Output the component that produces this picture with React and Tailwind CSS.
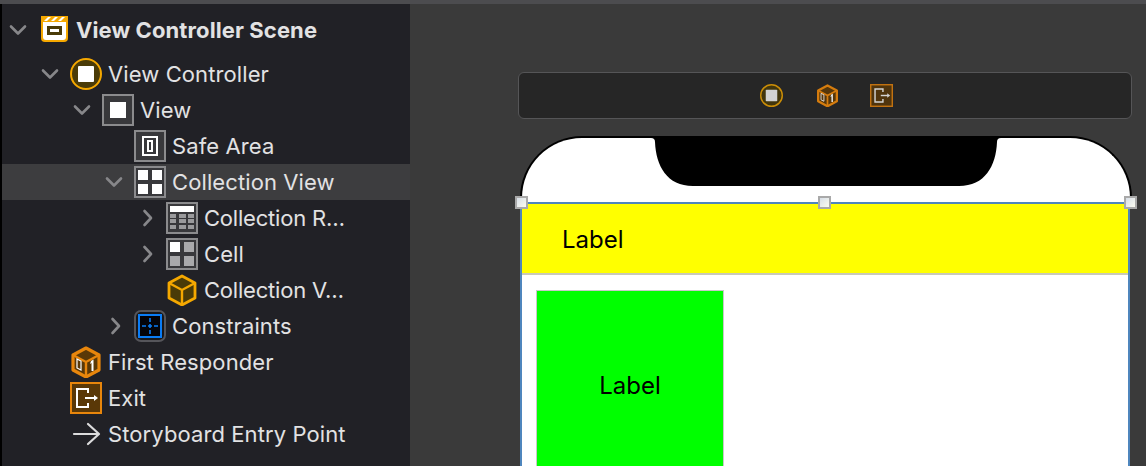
import React from "react";

const ORANGE = "#f5a800";
const OLIVE = "#4a3b08";
const AMBER = "#e8860c";
const BROWN = "#5a3807";

const Chevron = ({ dir }) => (
  <svg width="20" height="20" viewBox="0 0 20 20" fill="none" stroke="#87878a" strokeWidth="2.6" strokeLinecap="round" strokeLinejoin="round">
    {dir === "down" ? <path d="M3 6.5 L10 13.5 L17 6.5" /> : <path d="M8.5 3 L15 10 L8.5 17" />}
  </svg>
);

const Box = ({ children }) => (
  <svg width="32" height="32" viewBox="0 0 32 32">
    <rect x="1" y="1" width="30" height="30" fill="#38383b" stroke="#8b8b8d" strokeWidth="2" />
    {children}
  </svg>
);

const SceneIcon = () => (
  <svg width="32" height="32" viewBox="0 0 32 32">
    <path d="M3 2 H30 V24 Q30 28 26 28 H7 Q3 28 3 24 Z" fill={ORANGE} />
    <path d="M5 8 H28 V23 Q28 26 25 26 H8 Q5 26 5 23 Z" fill="#fff" />
    <path d="M6 7 L10 3 H13 L9 7 Z M13 7 L17 3 H20 L16 7 Z M20 7 L24 3 H27 L23 7 Z" fill="#fff" />
    <rect x="9" y="12" width="15" height="9" fill={OLIVE} />
    <rect x="12" y="15" width="9" height="3" fill="#fff" />
  </svg>
);

const ControllerIcon = ({ size = 32 }) => (
  <svg width={size} height={size} viewBox="0 0 32 32">
    <circle cx="16" cy="16" r="15" fill={OLIVE} stroke={ORANGE} strokeWidth="2" />
    <rect x="8" y="8" width="16" height="16" rx="1" fill="#fff" />
  </svg>
);

const ViewIcon = () => (
  <Box>
    <rect x="8" y="8" width="16" height="16" fill="#fff" />
  </Box>
);

const SafeAreaIcon = () => (
  <Box>
    <path fillRule="evenodd" d="M8 6 H24 V26 H8 Z M10 8 V24 H22 V8 Z" fill="#fff" />
    <path fillRule="evenodd" d="M13 10 H19 V22 H13 Z M15 12 V20 H17 V12 Z" fill="#fff" />
  </Box>
);

const GridIcon = () => (
  <Box>
    <rect x="4" y="4" width="10" height="10" fill="#fff" />
    <rect x="18" y="4" width="10" height="10" fill="#fff" />
    <rect x="4" y="18" width="10" height="10" fill="#fff" />
    <rect x="18" y="18" width="10" height="10" fill="#fff" />
  </Box>
);

const TableIcon = () => (
  <Box>
    <rect x="4" y="4" width="24" height="6" fill="#fff" />
    {[12, 17, 23].map((y) =>
      [4, 13, 22].map((x) => <rect key={`${x}-${y}`} x={x} y={y} width={x === 13 ? 7 : 6} height="4" fill="#9a9a9c" />)
    )}
  </Box>
);

const CellIcon = () => (
  <Box>
    <rect x="4" y="4" width="10" height="10" fill="#fff" />
    <rect x="18" y="4" width="10" height="10" fill="#a9a9ab" />
    <rect x="4" y="18" width="10" height="10" fill="#a9a9ab" />
    <rect x="18" y="18" width="10" height="10" fill="#a9a9ab" />
  </Box>
);

const CubeIcon = () => (
  <svg width="32" height="32" viewBox="0 0 32 32">
    <path d="M16 2 L29 9 V24 L16 31 L3 24 V9 Z" fill={OLIVE} stroke={ORANGE} strokeWidth="2.8" strokeLinejoin="round" />
    <path d="M3 9 L16 16 L29 9 M16 16 V31" fill="none" stroke={ORANGE} strokeWidth="2.4" />
  </svg>
);

const ConstraintsIcon = () => (
  <svg width="32" height="32" viewBox="0 0 32 32">
    <rect x="1" y="1" width="30" height="30" rx="6" fill="#18181b" stroke="#55555a" strokeWidth="2" />
    <rect x="5" y="5" width="22" height="22" fill="#04040a" stroke="#0a7cf5" strokeWidth="2" />
    <path d="M16 8 V12 M16 14 V18 M16 20 V24 M8 16 H12 M14 16 H18 M20 16 H24" stroke="#0a7cf5" strokeWidth="1.6" />
  </svg>
);

const ResponderIcon = ({ size = 32 }) => (
  <svg width={size} height={size} viewBox="0 0 32 32">
    <path d="M16 2 L29 9 V24 L16 31 L3 24 V9 Z" fill={BROWN} stroke={AMBER} strokeWidth="3.2" strokeLinejoin="round" />
    <path d="M3 9 L16 16 L29 9 M16 16 V31" fill="none" stroke={AMBER} strokeWidth="2.4" />
    <path d="M7 13 L11 15 V24 L7 22 Z" fill="none" stroke="#fff" strokeWidth="1.2" />
    <path d="M21 15 L23.5 13.5 V25 H21.5 V17 L20 18 Z" fill="#fff" />
  </svg>
);

const ExitIcon = ({ size = 32 }) => (
  <svg width={size} height={size} viewBox="0 0 32 32">
    <rect x="1" y="1" width="30" height="30" fill={BROWN} stroke={AMBER} strokeWidth="2" />
    <path d="M18 11 V7 H7 V25 H18 V21" fill="none" stroke="#fff" strokeWidth="2" />
    <path d="M15 16 H25" stroke="#fff" strokeWidth="2" />
    <path d="M24 13 L28 16 L24 19 Z" fill="#fff" />
  </svg>
);

const ArrowIcon = () => (
  <svg width="32" height="32" viewBox="0 0 32 32" fill="none" stroke="#dcdcdd" strokeWidth="2.2" strokeLinecap="round" strokeLinejoin="round">
    <path d="M4 16 H28 M18 6 L29 16 L18 26" />
  </svg>
);

const rows = [
  { depth: 0, open: "down", Icon: SceneIcon, label: "View Controller Scene", bold: true },
  { depth: 1, open: "down", Icon: ControllerIcon, label: "View Controller" },
  { depth: 2, open: "down", Icon: ViewIcon, label: "View" },
  { depth: 3, Icon: SafeAreaIcon, label: "Safe Area" },
  { depth: 3, open: "down", Icon: GridIcon, label: "Collection View", selected: true },
  { depth: 4, open: "right", Icon: TableIcon, label: "Collection R…", tight: true },
  { depth: 4, open: "right", Icon: CellIcon, label: "Cell" },
  { depth: 4, Icon: CubeIcon, label: "Collection V…", tight: true },
  { depth: 3, open: "right", Icon: ConstraintsIcon, label: "Constraints" },
  { depth: 1, Icon: ResponderIcon, label: "First Responder" },
  { depth: 1, Icon: ExitIcon, label: "Exit" },
  { depth: 1, Icon: ArrowIcon, label: "Storyboard Entry Point" },
];

const indents = ["pl-[6px]", "pl-[38px]", "pl-[70px]", "pl-[102px]", "pl-[134px]"];

const TreeRow = ({ depth, open, Icon, label, bold, selected, tight }) => (
  <div className={`flex h-9 items-center ${indents[depth]} ${selected ? "bg-[#3d3d3f]" : ""} ${bold ? "mb-2" : ""}`}>
    <div className="flex w-5 shrink-0 justify-center">{open && <Chevron dir={open} />}</div>
    <div className="ml-[10px] flex w-8 shrink-0 justify-center">
      <Icon />
    </div>
    <span className={`ml-[6px] whitespace-nowrap text-[22px] leading-none text-[#e2e2e3] ${bold ? "font-bold" : ""} ${tight ? "tracking-[-0.2px]" : "tracking-[0.1px]"}`}>{label}</span>
  </div>
);

const Handle = ({ className }) => (
  <div className={`absolute top-[-8px] h-[13px] w-[13px] border-2 border-[#a9a9a9] bg-gradient-to-br from-[#d8dfe8] to-[#fbfbf0] ${className}`} />
);

export default function App() {
  return (
    <div className="flex h-[466px] w-[1146px] flex-col overflow-hidden bg-[#3a3a3a] font-['Inter',sans-serif]">
      <div className="h-1 shrink-0 bg-[#4c4c4f]" />
      <div className="flex min-h-0 flex-1">
        <aside className="w-[410px] shrink-0 border-l-2 border-black bg-[#212126] pt-2">
          {rows.map((row) => (
            <TreeRow key={row.label} {...row} />
          ))}
        </aside>

        <main className="pl-[108px] pt-[68px]">
          <div className="flex h-[47px] w-[614px] items-center rounded-md border border-[#555557] bg-[#262626] pl-[241px]">
            <div className="opacity-80">
              <ControllerIcon size={23} />
            </div>
            <div className="ml-[33px] opacity-90">
              <ResponderIcon size={23} />
            </div>
            <div className="ml-[31px] opacity-80">
              <ExitIcon size={23} />
            </div>
          </div>

          <div className="relative ml-[2px] mt-[17px] w-[612px]">
            <div className="relative h-[66px] rounded-t-[62px] border-x-2 border-t-2 border-black bg-white">
              <svg className="absolute left-[129px] top-[-2px]" width="350" height="50" viewBox="0 0 350 50">
                <path d="M0 0 H350 V2 Q346 2 346 6 C345 30 334 50 308 50 H42 C16 50 5 30 4 6 Q4 2 0 2 Z" fill="#000" />
              </svg>
            </div>
            <div className="relative w-[610px] border-x-2 border-t-2 border-[#4f86bd] bg-white">
              <Handle className="left-[-7px]" />
              <Handle className="left-[296px]" />
              <Handle className="left-[602px]" />
              <div className="flex h-[71px] items-center border-b-2 border-[#c9c9b8] bg-[#ffff00] pl-10 pt-[2px] text-[24px] text-black">Label</div>
              <div className="px-[14px] pt-[15px]">
                <div className="flex h-[192px] w-[188px] items-center justify-center border border-[#c8c8c8] bg-[#00ff00] text-[24px] text-black">
                  Label
                </div>
              </div>
            </div>
          </div>
        </main>
      </div>
    </div>
  );
}
